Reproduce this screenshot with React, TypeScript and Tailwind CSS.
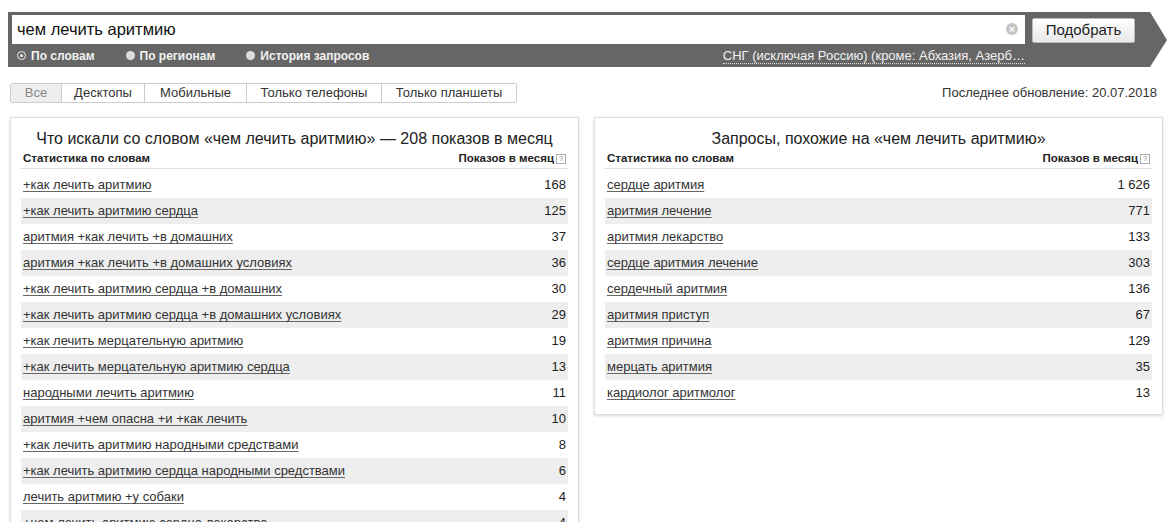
import React from "react";

type Row = { phrase: string; count: string };

const leftRows: Row[] = [
  { phrase: "+как лечить аритмию", count: "168" },
  { phrase: "+как лечить аритмию сердца", count: "125" },
  { phrase: "аритмия +как лечить +в домашних", count: "37" },
  { phrase: "аритмия +как лечить +в домашних условиях", count: "36" },
  { phrase: "+как лечить аритмию сердца +в домашних", count: "30" },
  { phrase: "+как лечить аритмию сердца +в домашних условиях", count: "29" },
  { phrase: "+как лечить мерцательную аритмию", count: "19" },
  { phrase: "+как лечить мерцательную аритмию сердца", count: "13" },
  { phrase: "народными лечить аритмию", count: "11" },
  { phrase: "аритмия +чем опасна +и +как лечить", count: "10" },
  { phrase: "+как лечить аритмию народными средствами", count: "8" },
  { phrase: "+как лечить аритмию сердца народными средствами", count: "6" },
  { phrase: "лечить аритмию +у собаки", count: "4" },
  { phrase: "+чем лечить аритмию сердца лекарства", count: "4" },
];

const rightRows: Row[] = [
  { phrase: "сердце аритмия", count: "1 626" },
  { phrase: "аритмия лечение", count: "771" },
  { phrase: "аритмия лекарство", count: "133" },
  { phrase: "сердце аритмия лечение", count: "303" },
  { phrase: "сердечный аритмия", count: "136" },
  { phrase: "аритмия приступ", count: "67" },
  { phrase: "аритмия причина", count: "129" },
  { phrase: "мерцать аритмия", count: "35" },
  { phrase: "кардиолог аритмолог", count: "13" },
];

const tabs = [
  { label: "Все", w: "w-[50px]" },
  { label: "Десктопы", w: "w-[83px]" },
  { label: "Мобильные", w: "w-[102px]" },
  { label: "Только телефоны", w: "w-[135px]" },
  { label: "Только планшеты", w: "w-[135px]" },
];

const Radio = ({ checked, label }: { checked?: boolean; label: string }) => (
  <span className="flex items-center gap-[5px]">
    {checked ? (
      <span className="w-[9px] h-[9px] rounded-full border-[1.5px] border-[#eee] flex items-center justify-center">
        <span className="w-[3px] h-[3px] rounded-full bg-[#eee]" />
      </span>
    ) : (
      <span className="w-[9px] h-[9px] rounded-full bg-[#ddd]" />
    )}
    <span>{label}</span>
  </span>
);

const HelpMark = () => (
  <span className="inline-flex items-center justify-center w-[10px] h-[10px] border border-[#aaa] text-[8px] leading-none text-[#888] font-normal ml-[2px]">
    ?
  </span>
);

const StatTable = ({ title, rows }: { title: string; rows: Row[] }) => (
  <div className="flex-1 border border-[#ddd] shadow-[0_1px_3px_rgba(0,0,0,0.15)] px-[10px] pt-[11px] pb-[8px] bg-white">
    <div className="text-center text-[16px] leading-[20px] text-[#222]">{title}</div>
    <div className="flex justify-between items-center h-[20px] border-b border-[#ddd] text-[11.5px] font-bold text-[#222] px-[2px]">
      <span>Статистика по словам</span>
      <span className="flex items-center">
        Показов в месяц
        <HelpMark />
      </span>
    </div>
    <div className="mt-[3px]">
      {rows.map((r, i) => (
        <div
          key={i}
          className={`flex justify-between items-center h-[26px] px-[2px] text-[13px] text-[#333] ${
            i % 2 === 1 ? "bg-[#eee]" : ""
          }`}
        >
          <span className="underline underline-offset-2 decoration-[#666]">{r.phrase}</span>
          <span className="text-[13px] text-[#222]">{r.count}</span>
        </div>
      ))}
    </div>
  </div>
);

export default function App() {
  return (
    <div className="w-[1168px] h-[522px] overflow-hidden bg-white font-['Liberation_Sans',Arial,sans-serif]">
      {/* search bar with arrow tail */}
      <div className="flex mt-[12px] ml-[8px]">
        <div className="w-[1142px] h-[55px] bg-[#666] flex flex-col px-[4px] pt-[2px]">
          <div className="flex items-center h-[30px]">
            <div className="w-[1013px] h-[29px] bg-white flex items-center justify-between px-[5px]">
              <span className="text-[16.5px] text-[#111]">чем лечить аритмию</span>
              <span className="w-[12px] h-[12px] rounded-full bg-[#c4c4c4] flex items-center justify-center text-white text-[11px] font-bold leading-none mr-[2px]">
                ×
              </span>
            </div>
            <button className="ml-[7px] w-[103px] h-[25px] mt-[3px] bg-gradient-to-b from-white to-[#e8e8e8] border border-[#bbb] rounded-[2px] text-[15px] text-[#222]">
              Подобрать
            </button>
          </div>
          <div className="flex items-center h-[23px] text-[12px] font-bold text-[#f2f2f2] pl-[5px]">
            <div className="flex gap-[31px]">
              <Radio checked label="По словам" />
              <Radio label="По регионам" />
              <Radio label="История запросов" />
            </div>
            <span className="ml-auto mr-[121px] font-normal text-[13px] border-b border-dotted border-[#ddd] leading-[15px]">
              СНГ (исключая Россию) (кроме: Абхазия, Азерб…
            </span>
          </div>
        </div>
        <svg width="17" height="55" viewBox="0 0 17 55">
          <polygon points="0,0 0,55 17,28" fill="#666" />
        </svg>
      </div>

      {/* device tabs + update date */}
      <div className="flex items-center justify-between mt-[16px] pl-[10px] pr-[11px]">
        <div className="flex h-[20px] border border-[#ccc] rounded-[2px] text-[13px]">
          {tabs.map((t, i) => (
            <span
              key={t.label}
              className={`flex items-center justify-center ${t.w} ${i > 0 ? "border-l border-[#ccc]" : ""} ${
                i === 0 ? "bg-[#eee] text-[#888]" : "bg-white text-[#333]"
              }`}
            >
              {t.label}
            </span>
          ))}
        </div>
        <span className="text-[13px] text-[#333]">Последнее обновление: 20.07.2018</span>
      </div>

      <div className="flex items-start gap-[15px] mt-[14px] pl-[10px] pr-[5px]">
        <StatTable
          title="Что искали со словом «чем лечить аритмию» — 208 показов в месяц"
          rows={leftRows}
        />
        <StatTable title="Запросы, похожие на «чем лечить аритмию»" rows={rightRows} />
      </div>
    </div>
  );
}
